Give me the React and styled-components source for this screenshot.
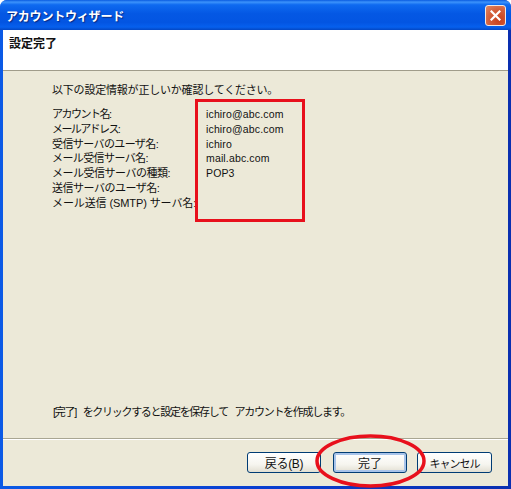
import React from 'react';
import styled, { createGlobalStyle } from 'styled-components';

const GlobalStyle = createGlobalStyle`
  html, body { margin: 0; padding: 0; background: #fff; }
  body { width: 511px; height: 489px; overflow: hidden; }
`;

const fontStack = `"Liberation Sans", "Noto Sans CJK JP", sans-serif`;

const Win = styled.div`
  position: relative;
  width: 511px;
  height: 489px;
  box-sizing: border-box;
  display: flex;
  flex-direction: column;
  background: linear-gradient(90deg, #0b5ae6 0%, #0a3fd0 50%, #0a2fb0 100%);
  border-radius: 7px 7px 0 0;
  overflow: hidden;
  font-family: ${fontStack};
  font-size: 11px;
  color: #111;
`;

const TitleBar = styled.div`
  height: 30px;
  flex: none;
  box-sizing: border-box;
  padding: 0 5px 0 6px;
  display: flex;
  align-items: center;
  justify-content: space-between;
  background: linear-gradient(180deg, #0a5be0 0%, #3c93fb 7%, #0f6af0 16%, #0458e4 45%, #0355e2 75%, #0660ee 90%, #0347c4 100%);
`;

const TitleText = styled.div`
  color: #fff;
  font-size: 12px;
  font-weight: 700;
  letter-spacing: -0.2px;
  text-shadow: 1px 1px 1px #0a2a80;
`;

const CloseBtn = styled.div`
  width: 21px;
  height: 21px;
  box-sizing: border-box;
  border: 1px solid #f2e8e4;
  border-radius: 3px;
  background: radial-gradient(circle at 70% 75%, #c8401c 0%, #d4603c 55%, #e08a66 100%);
  display: flex;
  align-items: center;
  justify-content: center;
`;

const Body = styled.div`
  flex: 1;
  min-height: 0;
  display: flex;
  flex-direction: column;
  margin: 0 3px 3px 3px;
  background: #ece9d8;
`;

const Banner = styled.div`
  height: 41px;
  flex: none;
  box-sizing: border-box;
  padding: 4px 0 0 6px;
  background: #fff;
  border-bottom: 1px solid #a09c8a;
  font-size: 12px;
  font-weight: 700;
  color: #111;
`;

const Content = styled.div`
  flex: 1;
  min-height: 0;
  display: flex;
  flex-direction: column;
  padding: 12px 0 0 49px;
  border-bottom: 1px solid #a9a692;
  box-shadow: 0 1px 0 #fff;
`;

const Intro = styled.div`
  line-height: 14px;
  letter-spacing: -0.2px;
  margin-bottom: 10px;
`;

const Rows = styled.div`
  display: grid;
  grid-template-columns: 154px 1fr;
  grid-auto-rows: 14.8px;
  line-height: 14.8px;
`;

const Label = styled.div`
  white-space: nowrap;
  letter-spacing: ${p => p.$ls}px;
`;

const Value = styled.div`
  font-size: 10.5px;
  letter-spacing: 0.15px;
`;

const Notice = styled.div`
  margin-top: auto;
  margin-bottom: 19px;
  margin-left: 1px;
  line-height: 14px;
  letter-spacing: -1.3px;
  word-spacing: 5px;
`;

const Footer = styled.div`
  height: 47px;
  flex: none;
  box-sizing: border-box;
  padding: 13px 16px 0 0;
  display: flex;
  justify-content: flex-end;
`;

const Button = styled.div`
  width: ${p => p.$w}px;
  height: 21px;
  box-sizing: border-box;
  margin-left: ${p => p.$gap || 0}px;
  border: 1px solid #003c74;
  border-radius: 3px;
  background: linear-gradient(180deg, #ffffff 0%, #f6f5ef 60%, #e2dfd2 100%);
  box-shadow: ${p => (p.$primary ? 'inset 0 0 0 2px #a8c4ea' : 'none')};
  display: flex;
  align-items: center;
  justify-content: center;
  font-size: ${p => p.$size || 11}px;
  letter-spacing: ${p => p.$ls || 0}px;
  color: #111;
`;

const RedBox = styled.div`
  position: absolute;
  left: 195px;
  top: 99px;
  width: 110px;
  height: 123px;
  box-sizing: border-box;
  border: 3px solid #e8101c;
`;

const RedOval = styled.svg`
  position: absolute;
  left: 314px;
  top: 434px;
`;

const rows = [
  ['アカウント名:', 'ichiro@abc.com', -1.5],
  ['メールアドレス:', 'ichiro@abc.com', -1.6],
  ['受信サーバのユーザ名:', 'ichiro', -0.6],
  ['メール受信サーバ名:', 'mail.abc.com', -0.6],
  ['メール受信サーバの種類:', 'POP3', -0.5],
  ['送信サーバのユーザ名:', '', -0.5],
  ['メール送信 (SMTP) サーバ名:', '', -0.1],
];

export default function App() {
  return (
    <Win>
      <GlobalStyle />
      <TitleBar>
        <TitleText>アカウントウィザード</TitleText>
        <CloseBtn>
          <svg width="11" height="11" viewBox="0 0 11 11">
            <path d="M1.5 1.5 L9.5 9.5 M9.5 1.5 L1.5 9.5" stroke="#fff" strokeWidth="2.2" strokeLinecap="square" />
          </svg>
        </CloseBtn>
      </TitleBar>
      <Body>
        <Banner>設定完了</Banner>
        <Content>
          <Intro>以下の設定情報が正しいか確認してください。</Intro>
          <Rows>
            {rows.map(([label, value, ls]) => (
              <React.Fragment key={label}>
                <Label $ls={ls}>{label}</Label>
                <Value>{value}</Value>
              </React.Fragment>
            ))}
          </Rows>
          <Notice>[完了] をクリックすると設定を保存して アカウントを作成します。</Notice>
        </Content>
        <Footer>
          <Button $w={74} $size={12} $ls={-0.3}>戻る(B)</Button>
          <Button $w={74} $gap={12} $size={12} $primary>完了</Button>
          <Button $w={75} $gap={10} $ls={-1}>キャンセル</Button>
        </Footer>
      </Body>
      <RedBox />
      <RedOval width="114" height="55" viewBox="0 0 114 55">
        <ellipse cx="56.5" cy="27" rx="53.5" ry="25" fill="none" stroke="#e8101c" strokeWidth="3.5" />
      </RedOval>
    </Win>
  );
}
